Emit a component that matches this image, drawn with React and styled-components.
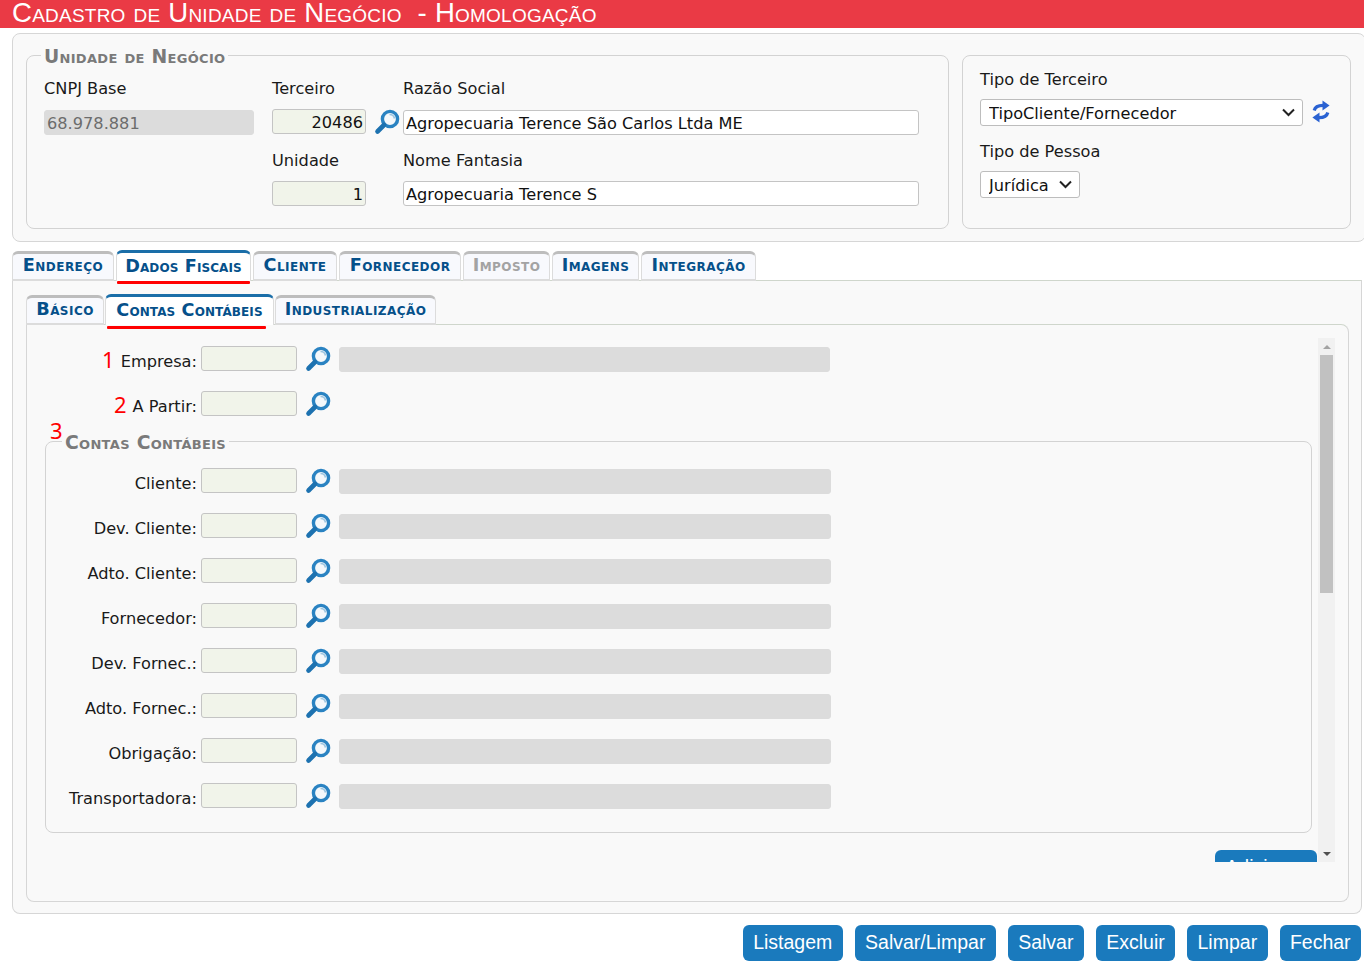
import React from 'react';
import styled, { createGlobalStyle } from 'styled-components';

const chevron = encodeURIComponent('<svg xmlns="http://www.w3.org/2000/svg" width="13" height="9" viewBox="0 0 13 9"><path d="M1 1.5 L6.5 7 L12 1.5" fill="none" stroke="#222" stroke-width="2"/></svg>');

const Global = createGlobalStyle`
  html, body { margin: 0; padding: 0; height: 965px; overflow: hidden; background: #fff; }
  body { font-family: "DejaVu Sans", sans-serif; font-size: 16.2px; color: #1a1a1a; }
  * { box-sizing: border-box; }
`;

const Page = styled.div`
  width: 1364px;
  height: 965px;
  overflow: hidden;
`;
const TitleBar = styled.h1`
  margin: 0;
  height: 28px;
  padding-left: 12px;
  background: #ea3a45;
  color: #fff;
  font: normal 400 27.6px/26px "Liberation Sans", sans-serif;
  font-variant: small-caps;
  letter-spacing: 0.23px;
  white-space: pre;
`;
const TopPanel = styled.section`
  margin: 5px 0 0 12px;
  width: 1354px;
  height: 209px;
  padding: 13px 12px 0 13px;
  display: flex;
  align-items: flex-start;
  gap: 13px;
  background: #f9f9f9;
  border: 1px solid #d6d6d6;
  border-radius: 8px;
`;
const Group = styled.fieldset`
  position: relative;
  margin: 0;
  min-width: 0;
  padding: ${p => p.$pad};
  width: ${p => p.$w};
  height: ${p => p.$h};
  border: 1px solid #d3d3d3;
  border-radius: 8px;
`;
const GroupTitle = styled.legend`
  margin-left: ${p => p.$ml || '0'};
  padding: 0 3px;
  height: 16px;
  font: 700 18.8px/20px "DejaVu Sans", sans-serif;
  font-variant: small-caps;
  letter-spacing: 0.3px;
  color: #7a7a7a;
  white-space: nowrap;
`;
const FieldGrid = styled.div`
  display: grid;
  grid-template-columns: 228px 131px 516px;
  grid-auto-rows: 71px;
`;
const Field = styled.div`
  display: flex;
  flex-direction: column;
  grid-column: ${p => p.$col};
`;
const FieldLabel = styled.label`
  height: 31px;
  line-height: 20px;
  padding-top: ${p => (p.$low ? '1px' : 0)};
  white-space: nowrap;
`;
const InputLine = styled.div`
  display: flex;
  align-items: flex-start;
  margin-top: -1px;
`;
const TextInput = styled.input`
  display: block;
  flex: none;
  height: 25px;
  width: ${p => p.$w};
  margin-top: ${p => p.$mt || 0};
  padding: 2px 2px 0;
  font: 16.2px "DejaVu Sans", sans-serif;
  color: #111;
  text-align: ${p => p.$align || 'left'};
  background: ${p => (p.$kind === 'code' ? '#f1f4ea' : p.$kind === 'off' ? '#dcdcdc' : '#fff')};
  border: 1px solid ${p => (p.$kind === 'off' ? '#dcdcdc' : '#c4c4c4')};
  border-radius: 3px;
  outline: none;
  ${p => p.$kind === 'off' && 'color: #6c6c6c;'}
`;
const SidePanel = styled.aside`
  margin-top: 8px;
  width: 389px;
  height: 174px;
  padding: 14px 17px;
  background: #f9f9f9;
  border: 1px solid #d3d3d3;
  border-radius: 8px;
`;
const SideLabel = styled.div`
  height: 19px;
  line-height: 19px;
  white-space: nowrap;
`;
const SelectLine = styled.div`
  display: flex;
  align-items: flex-start;
  gap: 9px;
  margin: 10px 0 16px;
`;
const Select = styled.select`
  appearance: none;
  height: 27px;
  width: ${p => p.$w};
  padding: 2px 24px 0 8px;
  font: 16.2px "DejaVu Sans", sans-serif;
  color: #111;
  background: #fff url("data:image/svg+xml,${chevron}") no-repeat right 7px center;
  border: 1px solid #bdbdbd;
  border-radius: 3px;
`;
const RefreshIcon = styled.svg`
  flex: none;
  margin-top: 1px;
`;
const TabRow = styled.nav`
  display: flex;
  align-items: flex-end;
  height: ${p => p.$h};
  margin: ${p => p.$m};
  gap: ${p => p.$gap || '2px'};
  position: relative;
`;
const Tab = styled.div`
  position: relative;
  width: ${p => p.$w};
  height: ${p => (p.$active ? '31px' : '30px')};
  padding-bottom: 3px;
  display: flex;
  align-items: center;
  justify-content: center;
  font: 700 17.7px "DejaVu Sans", sans-serif;
  font-variant: small-caps;
  letter-spacing: ${p => (p.$active ? '0.1px' : '0.45px')};
  color: ${p => (p.$off ? '#a3a3a3' : '#05508a')};
  background: ${p => (p.$active ? '#fff' : '#f8f9fd')};
  border: 1px solid #dcdcdc;
  border-top: 3px solid ${p => (p.$active ? '#1a6ea8' : '#bdbdbd')};
  border-bottom: ${p => (p.$active ? 'none' : '2px solid #dcdcdc')};
  border-radius: 6px 6px 0 0;
  white-space: nowrap;
  z-index: 1;
`;
const RedMark = styled.span`
  position: absolute;
  left: ${p => p.$l || 0};
  right: ${p => p.$r || 0};
  bottom: ${p => p.$b || '-3px'};
  height: 3px;
  background: #f00;
  border-radius: 1px;
`;
const TabBody = styled.section`
  margin-left: 12px;
  width: 1350px;
  height: 634px;
  padding: 13px 13px 0 13px;
  background: #f9f9f9;
  border: 1px solid #d6d6d6;
  border-top-color: #cfd6cc;
  border-radius: 0 0 8px 8px;
`;
const SubBody = styled.div`
  width: 1323px;
  height: 578px;
  padding: 13px 13px 0 0;
  border: 1px solid #d6d6d6;
  border-top-color: #cfd6cc;
  border-radius: 0 8px 8px 8px;
`;
const ScrollBox = styled.div`
  display: flex;
  height: 524px;
`;
const ScrollContent = styled.div`
  flex: 1;
  min-width: 0;
  overflow: hidden;
  padding-top: 8px;
`;
const Scrollbar = styled.div`
  width: 17px;
  display: flex;
  flex-direction: column;
  background: #f1f1f1;
`;
const ScrollArrow = styled.div`
  height: 17px;
  display: flex;
  align-items: center;
  justify-content: center;
  &::before {
    content: '';
    border-left: 4px solid transparent;
    border-right: 4px solid transparent;
    ${p => (p.$down ? 'border-top: 4px solid #505050;' : 'border-bottom: 4px solid #a3a3a3;')}
  }
`;
const ScrollTrack = styled.div`
  flex: 1;
  padding: 0 2px;
`;
const ScrollThumb = styled.div`
  height: 238px;
  background: #c1c1c1;
`;
const Row = styled.div`
  display: flex;
  align-items: center;
  height: 25px;
  margin-bottom: 20px;
`;
const RowLabel = styled.label`
  width: ${p => p.$w};
  flex: none;
  margin-right: 4px;
  text-align: right;
  white-space: nowrap;
  line-height: 25px;
  padding-top: 5px;
`;
const Num = styled.span`
  font: 22px/0 "Noto Sans", sans-serif;
  color: #f00;
  vertical-align: -1px;
  margin-right: ${p => p.$mr};
`;
const NumThree = styled.span`
  position: absolute;
  left: 4px;
  top: -31px;
  font: 22px/24px "Noto Sans", sans-serif;
  color: #f00;
`;
const RowGroup = styled.div`
  margin: -3px 6px 0 18px;
`;
const LookupSlot = styled.span`
  display: flex;
  flex: none;
  width: 42px;
  padding-left: 8px;
`;
const AddLine = styled.div`
  display: flex;
  justify-content: flex-end;
  margin-top: 17px;
  padding-right: 1px;
`;
const Button = styled.button`
  height: 36px;
  padding: 0 10.4px 2px;
  font: 19.5px "Liberation Sans", sans-serif;
  color: #fff;
  background: #1a7abd;
  border: none;
  border-radius: 6px;
  white-space: nowrap;
`;
const Footer = styled.footer`
  display: flex;
  justify-content: flex-end;
  gap: 12px;
  margin-top: 11px;
  padding-right: 3px;
`;

const Lens = () => (
  <svg width="26" height="26" viewBox="0 0 26 26" aria-hidden="true">
    <circle cx="16" cy="10" r="7.6" fill="#f4f8fb" stroke="#2a83c2" strokeWidth="3.4" />
    <path d="M15.5 5.5a5 5 0 0 1 5 4" fill="none" stroke="#9cc4df" strokeWidth="1.6" />
    <path d="M10 16 L3.5 22.5" stroke="#1d72b0" strokeWidth="4.6" strokeLinecap="round" />
  </svg>
);

const Refresh = () => (
  <RefreshIcon width="18" height="23" viewBox="0 0 18 23" aria-hidden="true">
    <path d="M2.2 10.5C3 7.2 6 5.4 11 5.4" fill="none" stroke="#2a62d2" strokeWidth="3.2" />
    <path d="M10.5 0.4 L17.6 5.4 L10.5 10.4 Z" fill="#2a62d2" />
    <path d="M15.8 12.5C15 15.8 12 17.6 7 17.6" fill="none" stroke="#2a62d2" strokeWidth="3.2" />
    <path d="M7.5 12.6 L0.4 17.6 L7.5 22.6 Z" fill="#2a62d2" />
  </RefreshIcon>
);

const mainRows = ['Cliente', 'Dev. Cliente', 'Adto. Cliente', 'Fornecedor', 'Dev. Fornec.', 'Adto. Fornec.', 'Obrigação', 'Transportadora'];
const tabs = [
  ['Endereço', '102px'], ['Dados Fiscais', '135px', true], ['Cliente', '84px'], ['Fornecedor', '122px'],
  ['Imposto', '87px'], ['Imagens', '87px'], ['Integração', '115px'],
];

export default function App() {
  return (
    <Page>
      <Global />
      <TitleBar>{'Cadastro de Unidade de Negócio  - Homologação'}</TitleBar>
      <TopPanel>
        <Group $w="923px" $h="182px" $pad="16px 17px 0 17px">
          <GroupTitle $ml="-3px">Unidade de Negócio</GroupTitle>
          <FieldGrid>
            <Field $col="1">
              <FieldLabel>CNPJ Base</FieldLabel>
              <TextInput $w="210px" $kind="off" readOnly value="68.978.881" />
            </Field>
            <Field $col="2">
              <FieldLabel>Terceiro</FieldLabel>
              <InputLine>
                <TextInput $w="94px" $kind="code" $align="right" readOnly value="20486" />
                <LookupSlot><Lens /></LookupSlot>
              </InputLine>
            </Field>
            <Field $col="3">
              <FieldLabel>Razão Social</FieldLabel>
              <TextInput $w="516px" readOnly value="Agropecuaria Terence São Carlos Ltda ME" />
            </Field>
            <Field $col="2">
              <FieldLabel $low>Unidade</FieldLabel>
              <TextInput $w="94px" $kind="code" $align="right" readOnly value="1" />
            </Field>
            <Field $col="3">
              <FieldLabel $low>Nome Fantasia</FieldLabel>
              <TextInput $w="516px" readOnly value="Agropecuaria Terence S" />
            </Field>
          </FieldGrid>
        </Group>
        <SidePanel>
          <SideLabel>Tipo de Terceiro</SideLabel>
          <SelectLine>
            <Select $w="323px" defaultValue="a"><option value="a">TipoCliente/Fornecedor</option></Select>
            <Refresh />
          </SelectLine>
          <SideLabel>Tipo de Pessoa</SideLabel>
          <SelectLine>
            <Select $w="100px" defaultValue="j"><option value="j">Jurídica</option></Select>
          </SelectLine>
        </SidePanel>
      </TopPanel>

      <TabRow $h="31px" $m="8px 0 -1px 12px">
        {tabs.map(([t, w, active]) => (
          <Tab key={t} $w={w} $active={active} $off={t === 'Imposto'}>
            {t}
            {active && <RedMark />}
          </Tab>
        ))}
      </TabRow>
      <TabBody>
        <TabRow $h="31px" $m="0 0 -1px 0" $gap="1px">
          <Tab $w="78px">Básico</Tab>
          <Tab $w="169px" $active>Contas Contábeis<RedMark $r="7px" $l="1px" $b="-4px" /></Tab>
          <Tab $w="161px">Industrialização</Tab>
        </TabRow>
        <SubBody>
          <ScrollBox>
            <ScrollContent>
              <Row>
                <RowLabel $w="170px"><Num $mr="6px">1</Num>Empresa:</RowLabel>
                <TextInput $w="96px" $kind="code" readOnly />
                <LookupSlot><Lens /></LookupSlot>
                <TextInput $w="491px" $kind="off" $mt="2px" readOnly />
              </Row>
              <Row>
                <RowLabel $w="170px"><Num $mr="6px">2</Num>A Partir:</RowLabel>
                <TextInput $w="96px" $kind="code" readOnly />
                <LookupSlot><Lens /></LookupSlot>
              </Row>
              <RowGroup>
                <Group $w="1267px" $h="400px" $pad="19px 0 0 0">
                  <GroupTitle $ml="16px">Contas Contábeis</GroupTitle>
                  <NumThree>3</NumThree>
                  {mainRows.map(r => (
                    <Row key={r}>
                      <RowLabel $w="151px">{r}:</RowLabel>
                      <TextInput $w="96px" $kind="code" readOnly />
                      <LookupSlot><Lens /></LookupSlot>
                      <TextInput $w="492px" $kind="off" $mt="2px" readOnly />
                    </Row>
                  ))}
                </Group>
              </RowGroup>
              <AddLine><Button>Adicionar</Button></AddLine>
            </ScrollContent>
            <Scrollbar>
              <ScrollArrow />
              <ScrollTrack><ScrollThumb /></ScrollTrack>
              <ScrollArrow $down />
            </Scrollbar>
          </ScrollBox>
        </SubBody>
      </TabBody>
      <Footer>
        <Button>Listagem</Button>
        <Button>Salvar/Limpar</Button>
        <Button>Salvar</Button>
        <Button>Excluir</Button>
        <Button>Limpar</Button>
        <Button>Fechar</Button>
      </Footer>
    </Page>
  );
}
